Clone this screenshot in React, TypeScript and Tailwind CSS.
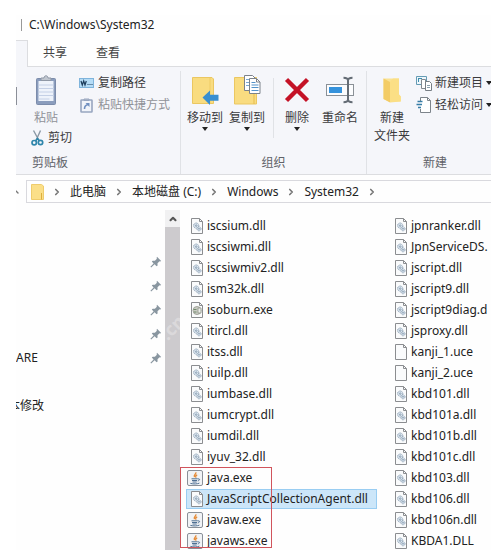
import type { ReactNode } from "react";
import { ChevronRight, ChevronUp } from "lucide-react";

type FileKind = "dll" | "exe" | "blank" | "java";
type FileEntry = { name: string; kind: FileKind; selected?: boolean };

const leftFiles: FileEntry[] = [
  { name: "iscsium.dll", kind: "dll" },
  { name: "iscsiwmi.dll", kind: "dll" },
  { name: "iscsiwmiv2.dll", kind: "dll" },
  { name: "ism32k.dll", kind: "dll" },
  { name: "isoburn.exe", kind: "exe" },
  { name: "itircl.dll", kind: "dll" },
  { name: "itss.dll", kind: "dll" },
  { name: "iuilp.dll", kind: "dll" },
  { name: "iumbase.dll", kind: "dll" },
  { name: "iumcrypt.dll", kind: "dll" },
  { name: "iumdil.dll", kind: "dll" },
  { name: "iyuv_32.dll", kind: "dll" },
  { name: "java.exe", kind: "java" },
  { name: "JavaScriptCollectionAgent.dll", kind: "dll", selected: true },
  { name: "javaw.exe", kind: "java" },
  { name: "javaws.exe", kind: "java" },
];

const rightFiles: FileEntry[] = [
  { name: "jpnranker.dll", kind: "dll" },
  { name: "JpnServiceDS.", kind: "dll" },
  { name: "jscript.dll", kind: "dll" },
  { name: "jscript9.dll", kind: "dll" },
  { name: "jscript9diag.d", kind: "dll" },
  { name: "jsproxy.dll", kind: "dll" },
  { name: "kanji_1.uce", kind: "blank" },
  { name: "kanji_2.uce", kind: "blank" },
  { name: "kbd101.dll", kind: "dll" },
  { name: "kbd101a.dll", kind: "dll" },
  { name: "kbd101b.dll", kind: "dll" },
  { name: "kbd101c.dll", kind: "dll" },
  { name: "kbd103.dll", kind: "dll" },
  { name: "kbd106.dll", kind: "dll" },
  { name: "kbd106n.dll", kind: "dll" },
  { name: "KBDA1.DLL", kind: "dll" },
];

const crumbs = ["此电脑", "本地磁盘 (C:)", "Windows", "System32"];

function FileIcon({ kind }: { kind: FileKind }) {
  if (kind === "java") {
    return (
      <svg viewBox="0 0 16 16" className="-ml-1 h-4 w-4 shrink-0" aria-hidden="true">
        <rect x=".5" y=".5" width="15" height="15" rx="1.5" fill="#f1f3f6" stroke="#8a9098" />
        <path d="M8.8 2.2c1 1.8-2.8 2.6-1.3 5M10.2 4.8c-1.9.8-1.8 1.6-1 2.8" fill="none" stroke="#e58a35" strokeWidth="1.3" />
        <path d="M4.5 8.8h6.3M5 10.5h5M5.5 12h4.2M11 9c2-.7 2.3 1.3-.3 2M3.4 13.4c3 .8 7 .7 9-.3" fill="none" stroke="#4e6f92" />
      </svg>
    );
  }
  return (
    <svg viewBox="0 0 12 16" className="h-4 w-3 shrink-0" aria-hidden="true">
      <path d="M.5.5h8l3 3v12H.5z" fill="#fafbfc" stroke="#8b8d90" />
      <path d="M8.5.5v3h3" fill="none" stroke="#8b8d90" />
      {kind === "dll" && (
        <g fill="#dfe9f2" stroke="#8398ad" strokeWidth=".9">
          <circle cx="5.2" cy="7.6" r="2.6" strokeDasharray="1.2 .5" />
          <circle cx="5.2" cy="7.6" r=".8" />
          <circle cx="8" cy="10.8" r="2" strokeDasharray="1 .5" />
          <circle cx="8" cy="10.8" r=".5" />
        </g>
      )}
      {kind === "exe" && (
        <g>
          <circle cx="6" cy="8.5" r="4" fill="#c9cbc4" stroke="#a3a69c" />
          <path d="M2.5 7.5h3M3 10h2.5" stroke="#6f8a6a" />
          <path d="M7 6h3v5H7z" fill="#eceeea" stroke="#909488" strokeWidth=".8" />
        </g>
      )}
    </svg>
  );
}

function FileList({ files, className }: { files: FileEntry[]; className: string }) {
  return (
    <ul className={className}>
      {files.map((f) => (
        <li key={f.name} className="flex h-[21px] items-center">
          <button
            className={
              f.selected
                ? "flex h-5 items-center gap-1 border border-[#99cdf2] bg-[#cce6f9] pr-2 pl-1 whitespace-nowrap"
                : "flex h-5 items-center gap-1 border border-transparent pl-1 whitespace-nowrap"
            }
          >
            <FileIcon kind={f.kind} />
            {f.name}
          </button>
        </li>
      ))}
    </ul>
  );
}

function Pin() {
  return (
    <svg viewBox="0 0 12 12" className="h-3 w-3" aria-hidden="true">
      <path d="M7 .8 11.2 5l-1.1.4-.6-.2-2 2 .1 2.2-1 .8-2-2L1.2 11.6l-.8-.8L3.6 7.6 1.8 5.6l.9-.9 2.2.1 2-2-.3-.9z" fill="#8996a0" />
    </svg>
  );
}

function Caret() {
  return (
    <svg viewBox="0 0 6 4" className="h-1 w-1.5 shrink-0" aria-hidden="true">
      <path d="M0 0h6L3 4z" fill="#222" />
    </svg>
  );
}

function BigButton({ icon, label, caret = false, dim = false }: { icon: ReactNode; label: ReactNode; caret?: boolean; dim?: boolean }) {
  return (
    <button className={dim ? "flex flex-col items-center text-[#909298]" : "flex flex-col items-center"}>
      <span className="flex h-8 items-center">{icon}</span>
      <span className="mt-[3px] leading-[18px] whitespace-nowrap">{label}</span>
      {caret && <Caret />}
    </button>
  );
}

function ClipboardIcon() {
  return (
    <svg viewBox="0 0 20 30" className="h-[30px] w-5" aria-hidden="true">
      <rect x=".5" y="3.5" width="19" height="26" rx="1" fill="#8b9dbd" stroke="#7c8cab" />
      <rect x="2.5" y="6" width="15" height="20" fill="#eef3fb" />
      <path d="M2.5 10h15M2.5 13.5h15M2.5 17h15M2.5 20.5h15M2.5 24h11" stroke="#c4d0e6" />
      <path d="M5 5.5V3h3c0-3 4-3 4 0h3v2.5z" fill="#c0c6cf" stroke="#8f98a6" />
    </svg>
  );
}

function CopyPathIcon() {
  return (
    <svg viewBox="0 0 15 10" className="h-[10px] w-[15px]" aria-hidden="true">
      <rect x=".5" y=".5" width="14" height="9" fill="#b5dcf6" stroke="#7fb4dc" />
      <path d="M2 3l1.3 4L4.7 3 6 7l1.3-4" fill="none" stroke="#1d3d5c" strokeWidth="1.2" />
      <path d="M8.5 6.5h1M10.5 6.5h1M12.5 6.5h1" stroke="#1d3d5c" />
    </svg>
  );
}

function PasteShortcutIcon() {
  return (
    <svg viewBox="0 0 13 15" className="h-[15px] w-[13px]" aria-hidden="true">
      <rect x="1" y="2" width="11" height="12" rx=".5" fill="#f1f4fa" stroke="#98a6c0" strokeWidth="1.6" />
      <path d="M4 2.5V1h5v1.5z" fill="#b7becb" stroke="#98a6c0" />
      <path d="M4.5 11c0-3 1-4 3.500-4.500" fill="none" stroke="#6f8fc0" strokeWidth="1.6" />
      <path d="M5.500 5H9.500v4z" fill="#6f8fc0" />
    </svg>
  );
}

function ScissorsIcon() {
  return (
    <svg viewBox="0 0 13 16" className="h-4 w-[13px]" aria-hidden="true">
      <path d="M2.5.5 8 10.5M9.5.5 5 10.5" fill="none" stroke="#8a98a5" strokeWidth="1.4" />
      <g fill="none" stroke="#2f86ab" strokeWidth="1.7">
        <circle cx="3.2" cy="12.7" r="2.2" />
        <circle cx="9.5" cy="12.5" r="2.2" />
        <path d="M4.5 11l2-2.500 1.800 2.300" />
      </g>
    </svg>
  );
}

function MoveToIcon() {
  return (
    <svg viewBox="0 0 27 30" className="h-[30px] w-[27px]" aria-hidden="true">
      <path d="M.5 2.5H20L21.5 4v24.5H.5z" fill="#f9dc80" stroke="#ebc761" />
      <path d="M18 3v25" stroke="#efcc65" />
      <path d="M10.500 22.500 18 15.500v4.300h8.500v6H18v4.200z" fill="#398fd0" />
    </svg>
  );
}

function CopyToIcon() {
  return (
    <svg viewBox="0 0 27 32" className="h-8 w-[27px]" aria-hidden="true">
      <path d="M.5 3.5h22V30H.5z" fill="#f9dc80" stroke="#ebc761" />
      <path d="M20 18v12" stroke="#e6bd4e" />
      <path d="M10.5 1.5h8l3 3v12h-11z" fill="#fff" stroke="#7c828a" />
      <path d="M12 5.5h5M12 8.5h4M12 11.5h4" stroke="#7ba9d2" />
      <path d="M15.500 4.500h7L26 8v11.500H15.500z" fill="#fff" stroke="#7c828a" />
      <path d="M22.5 4.500V8H26" fill="none" stroke="#7c828a" />
      <path d="M17.5 8.5h4M17.5 11h7M17.5 13.5h7M17.5 16.5h7" stroke="#5493c9" />
    </svg>
  );
}

function DeleteIcon() {
  return (
    <svg viewBox="0 0 26 26" className="h-[26px] w-[26px]" aria-hidden="true">
      <path d="M2.500 2.500 23.500 23.500M23.500 2.500 2.500 23.500" stroke="#c41226" strokeWidth="4.4" />
    </svg>
  );
}

function RenameIcon() {
  return (
    <svg viewBox="0 0 28 28" className="h-7 w-7" aria-hidden="true">
      <rect x=".5" y="8.5" width="27" height="11" fill="#fbfcfe" stroke="#8a9097" />
      <rect x="3" y="11" width="13" height="6" fill="#3592dc" />
      <path d="M17.5 1.800c3 0 4.500.3 4.500 2.700v19c0 2.400-1.500 2.700-4.500 2.700M26.500 1.800c-3 0-4.500.3-4.500 2.700v19c0 2.400 1.500 2.700 4.500 2.700" fill="none" stroke="#646c75" strokeWidth="2" />
    </svg>
  );
}

function NewFolderIcon() {
  return (
    <svg viewBox="0 0 18 28" className="h-7 w-[18px]" aria-hidden="true">
      <path d="M.5 2.5H16v16l2 2v5H6L.5 23z" fill="#fae292" />
      <path d="M.5 2.5 7 6v20.5L.5 23z" fill="#f3cc66" />
      <path d="M7 6l3-3.500h6v16l1.500 2v5L7 26.500z" fill="#fbdf85" />
    </svg>
  );
}

function NewItemIcon() {
  return (
    <svg viewBox="0 0 16 16" className="h-4 w-4 shrink-0" aria-hidden="true">
      <path d="M.5 1.5h10v8H.5z" fill="#eef6fb" stroke="#659bb4" />
      <path d="M2 3.5h4M2.500 3v4" stroke="#3e8fae" />
      <path d="M5.5 4.5h4v9h-4z" fill="#fff" stroke="#82898f" />
      <path d="M9.5 6.5h4l2 2v7h-6z" fill="#fff" stroke="#777e85" />
      <path d="M11 10.5h3M11 12.5h3" stroke="#8aa0ae" />
    </svg>
  );
}

function EasyAccessIcon() {
  return (
    <svg viewBox="0 0 16 16" className="h-4 w-4 shrink-0" aria-hidden="true">
      <path d="M4.5 4V.5h7l3 3v12h-10V12" fill="#fff" stroke="#7d848b" />
      <path d="M11.5.5v3h3" fill="none" stroke="#7d848b" />
      <path d="M1.5 4.5h5M.5 7.5H6M2 10.5h3" stroke="#377da6" strokeWidth="1.4" />
    </svg>
  );
}

function AddressFolderIcon() {
  return (
    <svg viewBox="0 0 13 16" className="h-4 w-[13px]" aria-hidden="true">
      <path d="M.5.5h10l2 1.500v13.500H.5z" fill="#fbdf88" stroke="#efcc6c" />
      <path d="M10.5 9v6.500" stroke="#dcae3e" />
    </svg>
  );
}

export default function App() {
  return (
    <div className="h-screen overflow-hidden bg-white pt-[15px] pr-1 pl-4 font-['Noto_Sans','Noto_Sans_CJK_SC',sans-serif] text-xs text-[#222]">
      <div className="relative h-full overflow-hidden bg-[#fefefe]">
        <header className="flex h-[25px] items-center gap-[7px] pb-[5px] pl-[5px]">
          <span className="h-3 w-px bg-[#999]" />
          <h1>C:\Windows\System32</h1>
        </header>

        <nav className="flex h-[27px] bg-[#f5f6fa]">
          <div className="w-3 border-t border-r border-[#dcdde0]" />
          <div className="flex flex-1 items-center gap-[29px] border-b border-[#dcdde0] bg-[#fefefe] pl-[15px] text-[#444]">
            <button>共享</button>
            <button>查看</button>
          </div>
        </nav>

        <section className="flex h-[108px] border-b border-[#dcdde0] bg-[#f5f6fa] pt-1 text-[#3a3a3c]">
          <div className="flex w-[164px] shrink-0 flex-col">
            <div className="flex h-[58px]">
              <div className="mt-4 h-[18px] w-px bg-[#8b8f98]" />
              <div className="ml-[15px] flex w-7 flex-col items-center pt-[3px]">
                <BigButton icon={<ClipboardIcon />} label="粘贴" dim />
              </div>
              <div className="ml-[19px] flex flex-col gap-1 pt-[3px]">
                <button className="flex h-[18px] items-center gap-1 whitespace-nowrap">
                  <CopyPathIcon />
                  复制路径
                </button>
                <button className="flex h-[18px] items-center gap-[5px] pl-px whitespace-nowrap text-[#909298]">
                  <PasteShortcutIcon />
                  粘贴快捷方式
                </button>
              </div>
            </div>
            <button className="ml-[15px] flex h-[18px] items-center gap-1 self-start">
              <ScissorsIcon />
              剪切
            </button>
            <p className="mt-2 ml-4 leading-4 text-[#606268]">剪贴板</p>
          </div>

          <div className="flex w-[187px] shrink-0 flex-col border-x border-[#e0e2e6]">
            <div className="flex h-[84px] items-start pt-[3px] pl-1.5">
              <BigButton icon={<MoveToIcon />} label="移动到" caret />
              <div className="ml-1.5">
                <BigButton icon={<CopyToIcon />} label="复制到" caret />
              </div>
              <div className="mt-1 ml-2 h-[60px] w-px bg-[#e0e2e6]" />
              <div className="ml-2.5">
                <BigButton icon={<DeleteIcon />} label="删除" caret />
              </div>
              <div className="ml-3">
                <BigButton icon={<RenameIcon />} label="重命名" />
              </div>
            </div>
            <p className="text-center leading-4 text-[#606268]">组织</p>
          </div>

          <div className="flex min-w-0 flex-1 flex-col">
            <div className="flex h-[84px] items-start pt-[3px] pl-[7px]">
              <BigButton
                icon={<NewFolderIcon />}
                label={
                  <>
                    新建
                    <br />
                    文件夹
                  </>
                }
              />
              <div className="ml-1.5 flex flex-col gap-1">
                <button className="flex h-[18px] items-center gap-[3px] whitespace-nowrap">
                  <NewItemIcon />
                  新建项目
                  <Caret />
                </button>
                <button className="flex h-[18px] items-center gap-[3px] whitespace-nowrap">
                  <EasyAccessIcon />
                  轻松访问
                  <Caret />
                </button>
              </div>
            </div>
            <p className="pl-3 text-center leading-4 text-[#606268]">新建</p>
          </div>
        </section>

        <div className="flex h-[35px] pt-[5px]">
          <div className="flex h-[23px] w-2.5 items-center">
            <ChevronUp className="-ml-1 h-2 w-2 text-[#777]" strokeWidth={4} aria-hidden="true" />
          </div>
          <nav className="flex h-[23px] flex-1 items-center border-y border-l border-[#d9d9de] pl-1">
            <AddressFolderIcon />
            <ChevronRight className="mx-2 h-2.5 w-2.5 text-[#777]" strokeWidth={4} aria-hidden="true" />
            {crumbs.map((c) => (
              <span key={c} className="flex items-center">
                <a href="#" className="whitespace-nowrap">{c}</a>
                <ChevronRight className="mx-2 h-2.5 w-2.5 text-[#777]" strokeWidth={4} aria-hidden="true" />
              </span>
            ))}
          </nav>
        </div>

        <main className="flex">
          <aside className="flex w-[149px] shrink-0 flex-col pt-10">
            {["", "", "", "", "ARE", "本修改"].map((label, i) => (
              <div key={i} className={i === 5 ? "mt-6 flex h-6 items-center overflow-hidden" : "flex h-6 items-center pr-[3px]"}>
                <span className={i === 5 ? "-ml-2" : ""}>{label}</span>
                {i < 5 && <span className="ml-auto"><Pin /></span>}
              </div>
            ))}
          </aside>
          <div className="w-[15px] shrink-0 bg-[#cdcbce]">
            <button className="flex h-[17px] w-full items-center justify-center bg-[#f1f1f2]" aria-label="向上滚动">
              <ChevronUp className="h-2.5 w-2.5 text-[#555]" strokeWidth={5} aria-hidden="true" />
            </button>
          </div>
          <div className="relative flex min-w-0 flex-1 overflow-hidden pt-[5px]">
            <FileList files={leftFiles} className="w-[204px] shrink-0 pl-1.5" />
            <FileList files={rightFiles} className="pl-1.5" />
            <div className="pointer-events-none absolute top-[257px] left-0 h-[81px] w-[92px] border border-[#d0545c]" />
          </div>
        </main>
        <span className="pointer-events-none absolute top-[298px] left-[143px] -rotate-45 text-lg font-bold text-white/30" aria-hidden="true">.cn</span>
      </div>
    </div>
  );
}
